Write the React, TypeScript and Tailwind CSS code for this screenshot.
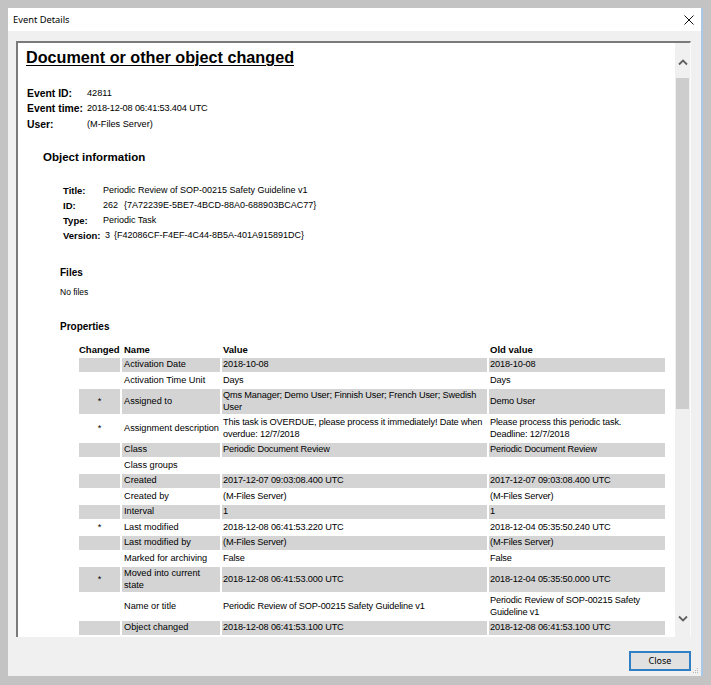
import React from "react";

type Cell = string | string[];
type Row = { c?: boolean; n: Cell; v: Cell; o: Cell };

const rows: Row[] = [
  { n: "Activation Date", v: "2018-10-08", o: "2018-10-08" },
  { n: "Activation Time Unit", v: "Days", o: "Days" },
  {
    c: true,
    n: "Assigned to",
    v: ["Qms Manager; Demo User; Finnish User; French User; Swedish", "User"],
    o: "Demo User",
  },
  {
    c: true,
    n: "Assignment description",
    v: ["This task is OVERDUE, please process it immediately! Date when", "overdue: 12/7/2018"],
    o: ["Please process this periodic task.", "Deadline: 12/7/2018"],
  },
  { n: "Class", v: "Periodic Document Review", o: "Periodic Document Review" },
  { n: "Class groups", v: "", o: "" },
  { n: "Created", v: "2017-12-07 09:03:08.400 UTC", o: "2017-12-07 09:03:08.400 UTC" },
  { n: "Created by", v: "(M-Files Server)", o: "(M-Files Server)" },
  { n: "Interval", v: "1", o: "1" },
  { c: true, n: "Last modified", v: "2018-12-08 06:41:53.220 UTC", o: "2018-12-04 05:35:50.240 UTC" },
  { n: "Last modified by", v: "(M-Files Server)", o: "(M-Files Server)" },
  { n: "Marked for archiving", v: "False", o: "False" },
  {
    c: true,
    n: ["Moved into current", "state"],
    v: "2018-12-08 06:41:53.000 UTC",
    o: "2018-12-04 05:35:50.000 UTC",
  },
  {
    n: "Name or title",
    v: "Periodic Review of SOP-00215 Safety Guideline v1",
    o: ["Periodic Review of SOP-00215 Safety", "Guideline v1"],
  },
  { n: "Object changed", v: "2018-12-08 06:41:53.100 UTC", o: "2018-12-08 06:41:53.100 UTC" },
];

function Txt({ t }: { t: Cell }) {
  if (Array.isArray(t)) {
    return (
      <>
        {t.map((l, i) => (
          <div key={i}>{l}</div>
        ))}
      </>
    );
  }
  return <>{t}</>;
}

function Chevron({ down }: { down?: boolean }) {
  return (
    <svg width="10" height="7" viewBox="0 0 10 7">
      <polyline
        points={down ? "1,1.5 5,5.5 9,1.5" : "1,5.5 5,1.5 9,5.5"}
        fill="none"
        stroke="#606060"
        strokeWidth="1.8"
      />
    </svg>
  );
}

export default function App() {
  return (
    <div className="w-[711px] h-[685px] bg-[#c3c3c3] pt-[8px] pl-[8px] flex font-['Liberation_Sans',Arial,sans-serif] text-black overflow-hidden">
      <div className="relative w-[693px] h-[668px] bg-[#f0f0f0] flex flex-col">
        {/* title bar */}
        <div className="h-[23px] bg-white flex items-center justify-between pl-[5px] pr-[7px]">
          <span className="font-['Noto_Sans',sans-serif] text-[9.3px] leading-[12px] mt-[1px]">Event Details</span>
          <svg width="10" height="10" viewBox="0 0 10 10" className="mt-[1px]">
            <path d="M0.5 0.5 L9.5 9.5 M9.5 0.5 L0.5 9.5" stroke="#111" strokeWidth="1" />
          </svg>
        </div>
        {/* panel */}
        <div className="ml-[8px] mt-[10px] w-[675px] h-[596px] border-t-2 border-l-2 border-t-[#7a7a7a] border-l-[#7a7a7a] border-r border-r-[#fafafa] flex">
          <div className="flex-1 bg-white overflow-hidden pl-[8px] pt-[5.3px]">
            <h1 className="text-[16.2px] leading-[19px] font-bold underline underline-offset-[2px] decoration-[1.3px] whitespace-nowrap">
              Document or other object changed
            </h1>
            <div className="mt-[18.3px] pl-[1px] grid grid-cols-[60px_auto] leading-[15.7px] w-max">
              <span className="font-bold text-[10.4px]">Event ID:</span>
              <span className="text-[9.2px]">42811</span>
              <span className="font-bold text-[10.4px]">Event time:</span>
              <span className="text-[9.2px] tracking-[-0.15px]">2018-12-08 06:41:53.404 UTC</span>
              <span className="font-bold text-[10.4px]">User:</span>
              <span className="text-[9.2px]">(M-Files Server)</span>
            </div>
            <div className="mt-[17.2px] ml-[17px] font-bold text-[11.5px] leading-[14px]">Object information</div>
            <div className="mt-[19.5px] ml-[37px] grid grid-cols-[40px_auto] leading-[15px] w-max">
              <span className="font-bold text-[9.5px]">Title:</span>
              <span className="text-[9px]">Periodic Review of SOP-00215 Safety Guideline v1</span>
              <span className="font-bold text-[9.5px]">ID:</span>
              <span className="text-[9px]">
                262<span className="ml-[6px]">{"{7A72239E-5BE7-4BCD-88A0-688903BCAC77}"}</span>
              </span>
              <span className="font-bold text-[9.5px]">Type:</span>
              <span className="text-[9px]">Periodic Task</span>
              <span className="font-bold text-[9.5px]">Version:</span>
              <span className="text-[9px]">
                <span className="ml-[2px]">3</span>
                <span className="ml-[4px]">{"{F42086CF-F4EF-4C44-8B5A-401A915891DC}"}</span>
              </span>
            </div>
            <div className="mt-[23px] ml-[34px] font-bold text-[10px] leading-[13px]">Files</div>
            <div className="mt-[7px] ml-[34px] text-[8.5px] leading-[13px]">No files</div>
            <div className="mt-[20.7px] ml-[34px] font-bold text-[10px] leading-[13px]">Properties</div>
            <table className="mt-[7.6px] ml-[51px] table-fixed border-separate border-spacing-[2px] w-[590px]">
              <colgroup>
                <col className="w-[41px]" />
                <col className="w-[98px]" />
                <col className="w-[265px]" />
                <col className="w-[176px]" />
              </colgroup>
              <thead>
                <tr className="text-[9.5px] font-bold leading-[11.5px] text-left">
                  <th className="py-[1px] px-0 text-left whitespace-nowrap">Changed</th>
                  <th className="py-[1px] px-[2px] text-left">Name</th>
                  <th className="py-[1px] px-[1px] text-left">Value</th>
                  <th className="py-[1px] px-[1px] text-left">Old value</th>
                </tr>
              </thead>
              <tbody>
                {rows.map((r, i) => {
                  const bg = i % 2 === 0 ? "bg-[#d4d4d4]" : "bg-white";
                  return (
                    <tr key={i} className="text-[9.2px] leading-[11.5px] align-middle">
                      <td className={`${bg} py-[1px] text-center`}>{r.c ? "*" : ""}</td>
                      <td className={`${bg} py-[1px] px-[2px] whitespace-nowrap`}>
                        <Txt t={r.n} />
                      </td>
                      <td className={`${bg} py-[1px] px-[1px] whitespace-nowrap tracking-[-0.15px]`}>
                        <Txt t={r.v} />
                      </td>
                      <td className={`${bg} py-[1px] px-[1px] whitespace-nowrap tracking-[-0.15px]`}>
                        <Txt t={r.o} />
                      </td>
                    </tr>
                  );
                })}
              </tbody>
            </table>
          </div>
          {/* scrollbar */}
          <div className="w-[15px] bg-[#f0f0f0] flex flex-col">
            <div className="h-[35px] flex items-center justify-center pt-[4px]">
              <Chevron />
            </div>
            <div className="mx-[1px] h-[331px] bg-[#cdcdcd]" />
            <div className="flex-1" />
            <div className="h-[38px] flex items-center justify-center">
              <Chevron down />
            </div>
          </div>
        </div>
        {/* footer */}
        <div className="flex justify-end pr-[10px] mt-[14px]">
          <button className="w-[62px] h-[20px] border-2 border-[#2f7fc4] bg-[#e1e1e1] font-['Noto_Sans',sans-serif] text-[9px] leading-[14px] text-black">
            Close
          </button>
        </div>
        <svg width="6" height="6" viewBox="0 0 6 6" className="absolute right-[2px] bottom-[2px]">
          <rect x="4" y="0" width="1" height="1" fill="#b8b8b8" />
          <rect x="2" y="2" width="1" height="1" fill="#b8b8b8" />
          <rect x="4" y="2" width="1" height="1" fill="#b8b8b8" />
          <rect x="0" y="4" width="1" height="1" fill="#b8b8b8" />
          <rect x="2" y="4" width="1" height="1" fill="#b8b8b8" />
          <rect x="4" y="4" width="1" height="1" fill="#b8b8b8" />
        </svg>
      </div>
      <div className="w-[2px] h-[668px] bg-[#aac8ea]" />
    </div>
  );
}
